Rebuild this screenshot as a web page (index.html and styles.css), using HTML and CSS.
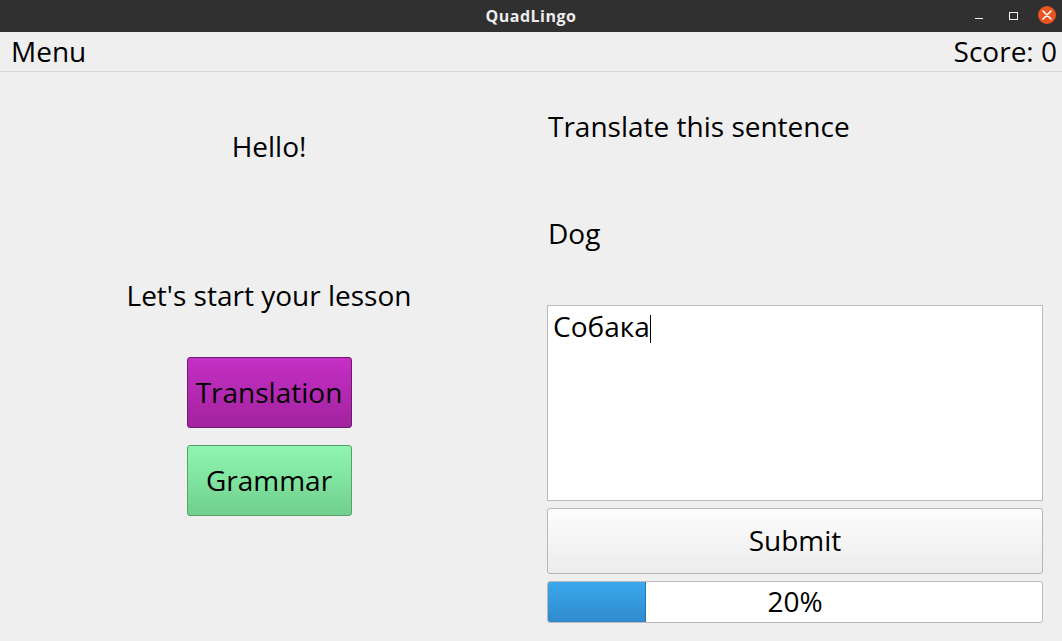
FILE: index.html
```html
<!DOCTYPE html>
<html lang="en">
<head>
<meta charset="utf-8">
<title>QuadLingo</title>
<link rel="stylesheet" href="styles.css">
</head>
<body>
<div class="window">
  <header class="titlebar">
    <div class="tb-side"></div>
    <div class="tb-title">QuadLingo</div>
    <div class="tb-controls">
      <span class="ctl ctl-min"></span>
      <span class="ctl ctl-max"></span>
      <span class="ctl ctl-close">
        <svg width="10" height="10" viewBox="0 0 10 10"><path d="M1 1L9 9M9 1L1 9" stroke="#fff" stroke-width="1.6" stroke-linecap="round"/></svg>
      </span>
    </div>
  </header>
  <nav class="menubar">
    <span class="menu-item">Menu</span>
    <span class="score">Score: 0</span>
  </nav>
  <main class="content">
    <section class="left">
      <div class="greeting">Hello!</div>
      <div class="prompt">Let's start your lesson</div>
      <button class="mode mode-translation">Translation</button>
      <button class="mode mode-grammar">Grammar</button>
    </section>
    <section class="right">
      <div class="task">Translate this sentence</div>
      <div class="word">Dog</div>
      <div class="answer">Собака<span class="caret"></span></div>
      <button class="submit">Submit</button>
      <div class="progress">
        <div class="progress-chunk" style="width: 20%"></div>
        <div class="progress-label">20%</div>
      </div>
    </section>
  </main>
</div>
</body>
</html>
```
FILE: styles.css
```css
html, body {
  margin: 0;
  padding: 0;
}
body {
  background: #efefef;
  font-family: "Open Sans", "Noto Sans", sans-serif;
  color: #000;
  width: 1062px;
  height: 641px;
  overflow: hidden;
}
.window {
  display: flex;
  flex-direction: column;
  height: 641px;
}
.titlebar {
  height: 32px;
  background: #303030;
  display: grid;
  grid-template-columns: 1fr auto 1fr;
  align-items: center;
}
.tb-title {
  color: #ececec;
  font-weight: 700;
  font-size: 16px;
  letter-spacing: 0.5px;
  line-height: 32px;
}
.tb-controls {
  display: flex;
  justify-content: flex-end;
  align-items: center;
  padding-right: 6px;
}
.ctl {
  display: block;
  box-sizing: border-box;
}
.ctl-min {
  width: 8px;
  height: 1px;
  background: #f2f2f2;
  margin-top: 4px;
  margin-right: 26px;
}
.ctl-max {
  width: 9px;
  height: 8px;
  border: 1px solid #f2f2f2;
  margin-top: -1px;
  margin-right: 20px;
}
.ctl-close {
  width: 18px;
  height: 18px;
  border-radius: 50%;
  background: #e95420;
  display: flex;
  align-items: center;
  justify-content: center;
  margin-top: -2px;
}
.menubar {
  height: 39px;
  border-bottom: 1px solid #d6d6d6;
  display: flex;
  justify-content: space-between;
  align-items: center;
  padding: 0 5px 1px 11px;
  box-sizing: border-box;
  height: 40px;
  font-size: 28px;
  line-height: 36px;
}
.content {
  display: flex;
  flex: 1;
  font-size: 28px;
  line-height: 36px;
}
.left {
  width: 538px;
  display: flex;
  flex-direction: column;
  align-items: center;
}
.greeting {
  margin-top: 56px;
}
.prompt {
  margin-top: 113px;
}
.mode {
  font-family: inherit;
  font-size: 28px;
  line-height: 36px;
  color: #000;
  width: 165px;
  height: 71px;
  border-radius: 3px;
  padding: 0 0 2px;
  margin: 0;
}
.mode-translation {
  margin-top: 44px;
  background: linear-gradient(#c52fc5, #a2239f);
  border: 1px solid #6e1a6e;
}
.mode-grammar {
  margin-top: 17px;
  background: linear-gradient(#8ff6b1, #70cf8d);
  border: 1px solid #58a06c;
}
.right {
  margin-left: 9px;
  width: 496px;
  display: flex;
  flex-direction: column;
}
.task {
  margin-top: 36px;
  padding-left: 1px;
}
.word {
  margin-top: 71px;
  padding-left: 1px;
}
.answer {
  margin-top: 54px;
  height: 196px;
  box-sizing: border-box;
  background: #fff;
  border: 1px solid #bababa;
  padding: 2px 5px;
  display: flex;
  align-items: flex-start;
}
.caret {
  display: block;
  width: 1px;
  height: 28px;
  background: #000;
  margin-top: 7px;
  margin-left: 0;
}
.submit {
  margin-top: 7px;
  height: 66px;
  box-sizing: border-box;
  width: 496px;
  font-family: inherit;
  font-size: 28px;
  line-height: 36px;
  color: #000;
  background: linear-gradient(#fdfdfd, #ececec);
  border: 1px solid #b6b6b6;
  border-radius: 3px;
  padding: 0 0 2px;
}
.progress {
  margin-top: 7px;
  height: 42px;
  box-sizing: border-box;
  background: #fff;
  border: 1px solid #b8b8b8;
  border-radius: 3px;
  display: grid;
  grid-template-areas: "bar";
  overflow: hidden;
}
.progress-chunk {
  grid-area: bar;
  box-sizing: border-box;
  background: linear-gradient(#3ba7ec, #2f8bcd);
  border: 1px solid #2474b0;
  border-radius: 2px 0 0 2px;
  margin: -1px 0 -1px -1px;
  height: 42px;
}
.progress-label {
  grid-area: bar;
  text-align: center;
  align-self: center;
  line-height: 36px;
  padding-bottom: 2px;
}
```
